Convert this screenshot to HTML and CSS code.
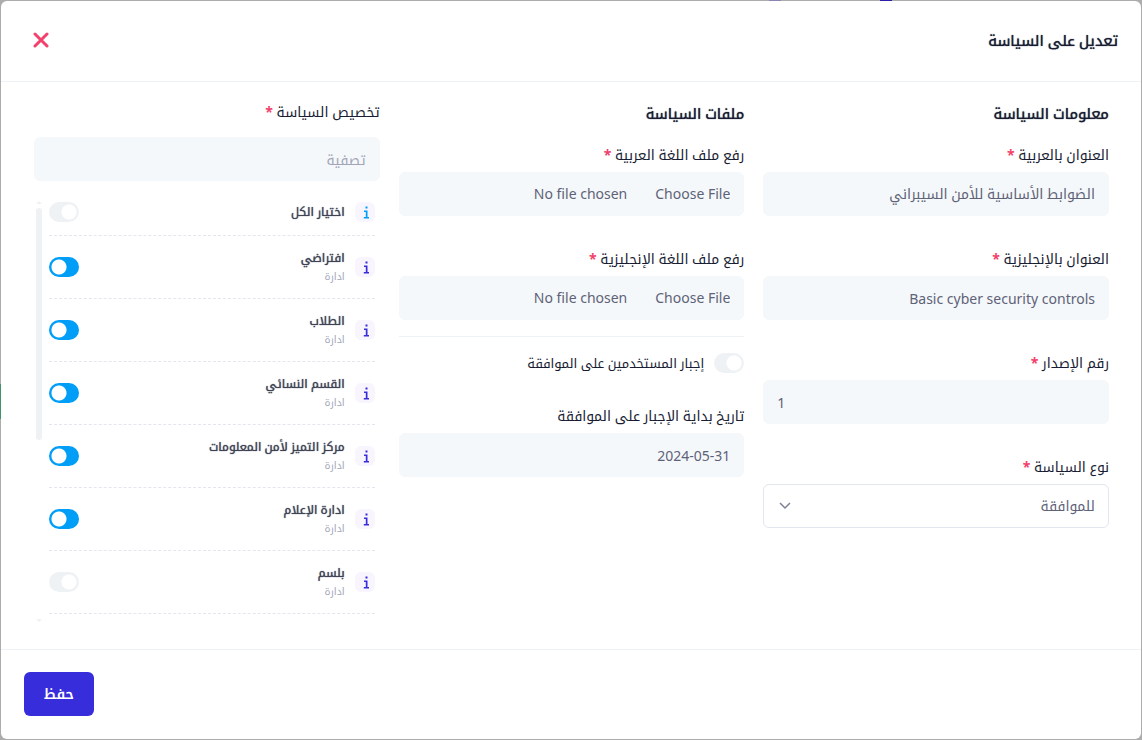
FILE: index.html
```html
<!DOCTYPE html>
<html lang="ar" dir="rtl">
<head>
    <meta charset="UTF-8">
    <title>تعديل على السياسة</title>
    <link rel="stylesheet" href="styles.css">
</head>
<body>
<!-- page behind the modal -->
<div class="behind">
    <span class="dot dot-light"></span>
    <span class="dot dot-dark"></span>
    <span class="tag"></span>
</div>

<svg class="sprite">
    <symbol id="info" viewBox="0 0 20 20">
        <path d="M10.500 4.500h2v2h-2zM9 8.500h3.500v6.500H14v1.500H8.800V15h2v-5H9z"/>
    </symbol>
</svg>

<form class="modal">
    <div class="modal-header">
        <h2 class="modal-title">تعديل على السياسة</h2>
        <button type="button" class="close" aria-label="إغلاق">
            <svg width="16" height="16" viewBox="0 0 16 16"><path d="M2 2l12 12M14 2L2 14"/></svg>
        </button>
    </div>

    <div class="modal-body">
        <!-- policy info -->
        <div class="col">
            <h3 class="col-title">معلومات السياسة</h3>
            <div class="field">
                <label class="required" for="title_ar">العنوان بالعربية</label>
                <input class="control" type="text" id="title_ar" value="الضوابط الأساسية للأمن السيبراني">
            </div>
            <div class="field">
                <label class="required" for="title_en">العنوان بالإنجليزية</label>
                <input class="control" type="text" id="title_en" value="Basic cyber security controls">
            </div>
            <div class="field">
                <label class="required" for="version">رقم الإصدار</label>
                <input class="control number" type="number" id="version" value="1">
            </div>
            <div class="field">
                <label class="required" for="type">نوع السياسة</label>
                <div class="select-wrap">
                    <select class="control select" id="type">
                        <option>للموافقة</option>
                    </select>
                    <svg class="chevron" width="12" height="8" viewBox="0 0 12 8"><path d="M1 1l5 5 5-5"/></svg>
                </div>
            </div>
        </div>

        <!-- policy files -->
        <div class="col">
            <h3 class="col-title">ملفات السياسة</h3>
            <div class="field">
                <label class="required" for="file_ar">رفع ملف اللغة العربية</label>
                <input class="control file" type="file" id="file_ar">
            </div>
            <div class="field">
                <label class="required" for="file_en">رفع ملف اللغة الإنجليزية</label>
                <input class="control file" type="file" id="file_en">
            </div>
            <div class="force">
                <input class="switch" type="checkbox" id="force">
                <label for="force">إجبار المستخدمين على الموافقة</label>
            </div>
            <div class="field">
                <label for="force_date">تاريخ بداية الإجبار على الموافقة</label>
                <input class="control" type="text" id="force_date" value="2024-05-31">
            </div>
        </div>

        <!-- departments -->
        <div class="col">
            <label class="required assign" for="filter">تخصيص السياسة</label>
            <input class="control filter" type="text" id="filter" placeholder="تصفية">
            <div class="scroller">
                <ul class="list">
                    <li class="item all">
                        <span class="icon"><svg width="20" height="20"><use href="#info"/></svg></span>
                        <label class="name" for="d0">اختيار الكل</label>
                        <input class="switch" type="checkbox" id="d0">
                    </li>
                    <li class="item">
                        <span class="icon"><svg width="20" height="20"><use href="#info"/></svg></span>
                        <label class="name" for="d1">افتراضي<small>ادارة</small></label>
                        <input class="switch" type="checkbox" id="d1" checked>
                    </li>
                    <li class="item">
                        <span class="icon"><svg width="20" height="20"><use href="#info"/></svg></span>
                        <label class="name" for="d2">الطلاب<small>ادارة</small></label>
                        <input class="switch" type="checkbox" id="d2" checked>
                    </li>
                    <li class="item">
                        <span class="icon"><svg width="20" height="20"><use href="#info"/></svg></span>
                        <label class="name" for="d3">القسم النسائي<small>ادارة</small></label>
                        <input class="switch" type="checkbox" id="d3" checked>
                    </li>
                    <li class="item">
                        <span class="icon"><svg width="20" height="20"><use href="#info"/></svg></span>
                        <label class="name" for="d4">مركز التميز لأمن المعلومات<small>ادارة</small></label>
                        <input class="switch" type="checkbox" id="d4" checked>
                    </li>
                    <li class="item">
                        <span class="icon"><svg width="20" height="20"><use href="#info"/></svg></span>
                        <label class="name" for="d5">ادارة الإعلام<small>ادارة</small></label>
                        <input class="switch" type="checkbox" id="d5" checked>
                    </li>
                    <li class="item">
                        <span class="icon"><svg width="20" height="20"><use href="#info"/></svg></span>
                        <label class="name" for="d6">بلسم<small>ادارة</small></label>
                        <input class="switch" type="checkbox" id="d6">
                    </li>
                </ul>
                <div class="bar">
                    <span class="arrow up"></span>
                    <span class="track"><span class="thumb"></span></span>
                    <span class="arrow down"></span>
                </div>
            </div>
        </div>
    </div>

    <div class="modal-footer">
        <button type="submit" class="save">حفظ</button>
    </div>
</form>
</body>
</html>
```
FILE: styles.css
```css
* {
    box-sizing: border-box;
    margin: 0;
    padding: 0;
}

body {
    background: #acacac;
    color: #181c32;
    font-family: "Noto Sans", "Noto Kufi Arabic", "Droid Arabic Kufi", "Noto Sans Arabic", "DejaVu Sans", sans-serif;
    font-size: 14px;
    line-height: 20px;
    padding: 1px;
}

input, select, button {
    font: inherit;
}

.sprite {
    display: none;
}

/* bits of the page under the backdrop */
.behind span {
    position: absolute;
}

.dot {
    top: 0;
    width: 12px;
    height: 2px;
}

.dot-light {
    left: 769px;
    background: #8a85b5;
}

.dot-dark {
    left: 880px;
    background: #2a1fa5;
}

.tag {
    left: 0;
    top: 384px;
    width: 2px;
    height: 35px;
    background: #3f9468;
}

.modal {
    position: relative;
    display: flex;
    flex-direction: column;
    min-height: calc(100vh - 2px);
    background: #fff;
    border-radius: 6px;
}

.modal-header {
    display: flex;
    align-items: center;
    justify-content: space-between;
    height: 81px;
    padding: 0 23px 3px;
    border-bottom: 1px solid #eff2f5;
}

/* regular width, thickened by the shadow */
.modal-title,
.col-title {
    font-size: 15px;
    font-weight: 400;
    text-shadow: 0 0 1px currentColor;
}

.close {
    display: flex;
    align-items: center;
    justify-content: center;
    width: 34px;
    height: 34px;
    border: 0;
    background: none;
    cursor: pointer;
}

.close path {
    fill: none;
    stroke: #f1416c;
    stroke-width: 3;
    stroke-linecap: round;
}

.modal-body {
    display: grid;
    grid-template-columns: repeat(3, minmax(0, 1fr));
    gap: 19px;
    flex: 1;
    padding: 19px 32px 27px 33px;
}

.col {
    display: flex;
    flex-direction: column;
}

.col-title {
    margin-bottom: 20px;
    line-height: 24px;
}

.field {
    margin-bottom: 33px;
}

.field label {
    display: block;
    margin-bottom: 7px;
}

.required::after {
    content: " *";
    color: #f1416c;
    font-weight: 700;
}

.control {
    display: block;
    width: 100%;
    height: 44px;
    padding: 0 13px;
    border: 1px solid #f5f8fa;
    border-radius: 6px;
    outline: 0;
    background: #f5f8fa;
    color: #5e6278;
}

.number {
    direction: ltr;
    text-align: left;
}

.select-wrap {
    position: relative;
}

.select {
    appearance: none;
    border-color: #e4e6ef;
    background: #fff;
}

.chevron {
    position: absolute;
    left: 16px;
    top: 18px;
    fill: none;
    stroke: #7e8299;
    stroke-width: 1.5;
    pointer-events: none;
}

.file {
    line-height: 42px;
}

.file::file-selector-button {
    margin: 0;
    margin-inline-end: 28px;
    padding: 0;
    border: 0;
    background: none;
    color: #5e6278;
    font: inherit;
}

.force {
    display: flex;
    align-items: center;
    gap: 10px;
    margin: -17px 0 33px;
    padding-top: 16px;
    border-top: 1px solid #eff2f5;
    font-size: 13px;
}

.switch {
    appearance: none;
    flex: none;
    width: 30px;
    height: 20px;
    border-radius: 10px;
    background: radial-gradient(circle at 20px 10px, #fff 7px, #eff2f5 8px);
    cursor: pointer;
}

.switch:checked {
    background: radial-gradient(circle at 10px 10px, #fff 7px, #009ef7 8px);
}

.assign {
    display: block;
    margin: 1px 0 15px;
}

.filter {
    margin-bottom: 20px;
}

.filter::placeholder {
    color: #a1a5b7;
}

.scroller {
    display: flex;
    flex: 1;
    justify-content: space-between;
    padding: 0 5px 0 2px;
}

.list {
    flex: 1;
    list-style: none;
}

.item {
    display: flex;
    align-items: center;
    gap: 10px;
    height: 63px;
    border-bottom: 1px dashed #e4e6ef;
}

.all {
    height: 35px;
    padding-bottom: 12px;
}

.icon {
    display: flex;
    width: 20px;
    height: 20px;
    border-radius: 6px;
    background: #f8f5ff;
}

.icon svg {
    fill: #372ddb;
}

.all .icon svg {
    fill: #009ef7;
}

.name {
    flex: 1;
    color: #3f4254;
    font-size: 12px;
    line-height: 18px;
    text-shadow: 0 0 1px currentColor;
}

.name small {
    display: block;
    color: #a1a5b7;
    font-size: 10px;
    text-shadow: none;
}

.bar {
    display: flex;
    flex-direction: column;
    gap: 4px;
    width: 6px;
    margin-right: 7px;
}

.arrow {
    border: 3px solid transparent;
}

.up {
    border-top: 0;
    border-bottom-color: #eff2f5;
}

.down {
    border-bottom: 0;
    border-top-color: #eff2f5;
}

.track {
    flex: 1;
}

.thumb {
    display: block;
    height: 57%;
    border-radius: 3px;
    background: #eff2f5;
}

.modal-footer {
    display: flex;
    justify-content: flex-end;
    padding: 22px 23px 23px;
    border-top: 1px solid #eff2f5;
}

.save {
    height: 44px;
    padding: 0 20px;
    border: 0;
    border-radius: 6px;
    background: #372ddb;
    color: #fff;
    font-weight: 600;
    cursor: pointer;
}
```
